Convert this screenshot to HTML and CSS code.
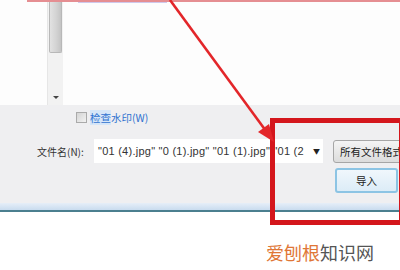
FILE: index.html
```html
<!DOCTYPE html>
<html>
<head>
<meta charset="utf-8">
<link rel="stylesheet" href="styles.css">
</head>
<body>
<div class="page">
  <div class="top">
    <div class="left-pad"></div>
    <div class="scrollbar">
      <div class="thumb"></div>
      <div class="track"></div>
      <div class="arrow-down"></div>
    </div>
    <div class="list">
      <div class="sel"></div>
    </div>
  </div>
  <div class="panel">
    <div class="check-row">
      <span class="checkbox"></span>
      <span class="check-label"><span class="hl">检查</span>水印(W)</span>
    </div>
    <div class="file-row">
      <span class="file-label">文件名(N):</span>
      <div class="file-input">
        <span class="file-text">"01 (4).jpg" "0 (1).jpg" "01 (1).jpg" "01 (2</span>
        <span class="caret">▼</span>
      </div>
      <div class="btn type-btn">所有文件格式</div>
    </div>
    <div class="btn-row">
      <div class="btn import-btn">导入</div>
    </div>
  </div>
  <div class="band"></div>
  <div class="line"></div>
  <div class="footer">
    <span class="wm"><span class="wm-o">爱刨根</span><span class="wm-g">知识网</span></span>
  </div>

  <div class="top-red"></div>
  <div class="red-box"></div>
  <svg class="arrow" width="400" height="270" viewBox="0 0 400 270">
    <line x1="170" y1="0" x2="266" y2="131" stroke="#e3262a" stroke-width="2.6"/>
    <polygon points="274,142 269,124 258,132" fill="#e3262a"/>
  </svg>
</div>
</body>
</html>
```

FILE: styles.css
```css
html, body {
  margin: 0;
  padding: 0;
  background: #ffffff;
}
.page {
  position: relative;
  width: 400px;
  height: 270px;
  overflow: hidden;
  font-family: "Noto Sans CJK SC", "Liberation Sans", sans-serif;
  display: flex;
  flex-direction: column;
}
.top {
  height: 105px;
  flex-shrink: 0;
  display: flex;
  background: #fdfdfd;
}
.left-pad {
  width: 47px;
  flex-shrink: 0;
}
.scrollbar {
  width: 16px;
  flex-shrink: 0;
  background: #f2f2f2;
  border-left: 1px solid #e6e6e6;
  box-sizing: border-box;
  display: flex;
  flex-direction: column;
  align-items: center;
}
.thumb {
  width: 13px;
  height: 53px;
  box-sizing: border-box;
  border: 1px solid #b8b8b8;
  border-top: none;
  border-radius: 0 0 2px 2px;
  background: linear-gradient(to right, #e2e2e2, #d2d2d2 60%, #c4c4c4);
}
.track {
  flex: 1;
}
.arrow-down {
  width: 0;
  height: 0;
  border-left: 3px solid transparent;
  border-right: 3px solid transparent;
  border-top: 3px solid #444;
  margin-bottom: 6px;
}
.list {
  flex: 1;
  padding-left: 15px;
}
.sel {
  width: 89px;
  height: 3px;
  background: #cfc8ec;
}
.panel {
  height: 98px;
  flex-shrink: 0;
  background: #efeff1;
  box-sizing: border-box;
  padding-top: 6px;
  display: flex;
  flex-direction: column;
}
.check-row {
  display: flex;
  align-items: center;
  gap: 3px;
  padding-left: 76px;
  height: 13px;
}
.checkbox {
  width: 11px;
  height: 11px;
  flex-shrink: 0;
  box-sizing: border-box;
  border: 1px solid #aaa;
  background: linear-gradient(135deg, #d4d4d4, #f2f2f2);
}
.check-label {
  font-size: 10.5px;
  line-height: 13px;
  color: #2f72d0;
}
.hl {
  background: #d6e6f8;
}
.file-row {
  margin-top: 15px;
  display: flex;
  align-items: center;
  height: 24px;
}
.file-label {
  margin-left: 37px;
  width: 57px;
  flex-shrink: 0;
  font-size: 10px;
  color: #333;
  white-space: nowrap;
}
.file-input {
  width: 229px;
  flex-shrink: 0;
  height: 24px;
  box-sizing: border-box;
  background: #ffffff;
  display: flex;
  align-items: center;
  padding-left: 4px;
  padding-right: 3px;
}
.file-text {
  flex: 1;
  font-family: "Liberation Sans", "DejaVu Sans", sans-serif;
  font-size: 11px;
  letter-spacing: 0.25px;
  color: #333;
  white-space: nowrap;
}
.caret {
  font-size: 7px;
  color: #222;
  margin-left: 3px;
}
.btn {
  box-sizing: border-box;
  border-radius: 3px;
  font-size: 10.5px;
  color: #222;
  white-space: nowrap;
  display: flex;
  align-items: center;
  flex-shrink: 0;
}
.type-btn {
  margin-left: 10px;
  width: 80px;
  height: 23px;
  padding-left: 6px;
  border: 1px solid #a6a6a6;
  background: linear-gradient(#f4f4f4, #dcdcdc);
}
.btn-row {
  margin-top: 5px;
  display: flex;
  padding-left: 335px;
}
.import-btn {
  width: 63px;
  height: 25px;
  justify-content: center;
  border: 2px solid #8cc4e4;
  background: linear-gradient(#f0f7fc, #dcecf7);
}
.band {
  height: 7px;
  flex-shrink: 0;
  background: linear-gradient(#e6eef8, #c9dcef);
}
.line {
  height: 2px;
  flex-shrink: 0;
  background: #4b7f8f;
}
.footer {
  flex: 1;
  background: #ffffff;
  padding-left: 266px;
  padding-top: 29px;
}
.wm {
  font-size: 18px;
  line-height: 20px;
}
.wm-o {
  color: #e07636;
}
.wm-g {
  color: #555555;
}
.top-red {
  position: absolute;
  left: 27px;
  top: 0;
  width: 373px;
  height: 2px;
  background: #e58e92;
}
.red-box {
  position: absolute;
  left: 270px;
  top: 118px;
  width: 134px;
  height: 107px;
  box-sizing: border-box;
  border: 5px solid #d4161c;
}
.arrow {
  position: absolute;
  left: 0;
  top: 0;
  pointer-events: none;
}
```
